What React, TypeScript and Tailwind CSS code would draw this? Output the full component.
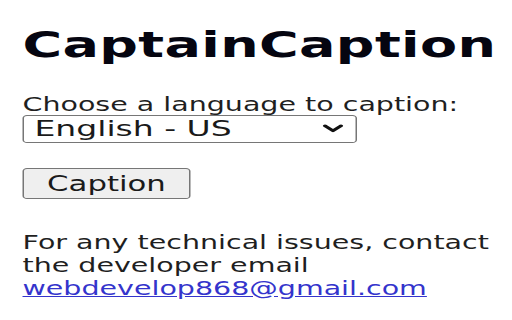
import { useState } from 'react'

const languages = ['English - US', 'English - UK', 'Español', 'Français', 'Deutsch']

function Chevron() {
  return (
    <svg
      viewBox="0 0 14 9"
      className="w-[14px] h-[9px]"
      fill="none"
      stroke="#111"
      strokeWidth="2.6"
      strokeLinecap="round"
      strokeLinejoin="round"
    >
      <path d="M1.6 1.8 L7 6.8 L12.4 1.8" />
    </svg>
  )
}

export default function App() {
  const [language, setLanguage] = useState(languages[0])

  return (
    <div className="w-[512px] h-[320px] bg-white overflow-hidden">
      {/* the popup is stretched sideways in the reference */}
      <div
        className="w-[342px] origin-top-left scale-x-[1.5] pl-[15px] pt-[24px] text-[#1f1f1f]"
        style={{ fontFamily: '"DejaVu Sans", Verdana, sans-serif' }}
      >
        <h1 className="text-[36px] leading-[42px] font-bold tracking-[0.25px] text-[#050510]">
          CaptainCaption
        </h1>

        <label
          htmlFor="language"
          className="block mt-[27px] text-[19px] leading-[22px]"
        >
          Choose a language to caption:
        </label>
        <div className="relative w-[223px]">
          <select
            id="language"
            value={language}
            onChange={(e) => setLanguage(e.target.value)}
            className="block w-full h-[28px] appearance-none bg-white border border-[#767676] rounded-[3px] pl-[7px] text-[22px] leading-[26px] text-[#1a1a1a] outline-none"
            style={{ fontFamily: '"DejaVu Sans", Verdana, sans-serif' }}
          >
            {languages.map((lang) => (
              <option key={lang}>{lang}</option>
            ))}
          </select>
          <div className="absolute right-[9px] top-[9px] pointer-events-none">
            <Chevron />
          </div>
        </div>

        <button
          type="button"
          className="block mt-[25px] w-[112px] h-[31px] bg-[#efefef] border border-[#767676] rounded-[3px] text-[20.5px] leading-[24px] text-[#1a1a1a]"
          style={{ fontFamily: '"DejaVu Sans", Verdana, sans-serif' }}
        >
          Caption
        </button>

        <p className="mt-[32px] text-[19px] leading-[23px]">
          For any technical issues, contact
          <br />
          the developer email
          <br />
          <a
            href="mailto:webdevelop868@gmail.com"
            className="text-[#3434cc] underline"
          >
            webdevelop868@gmail.com
          </a>
        </p>
      </div>
    </div>
  )
}
